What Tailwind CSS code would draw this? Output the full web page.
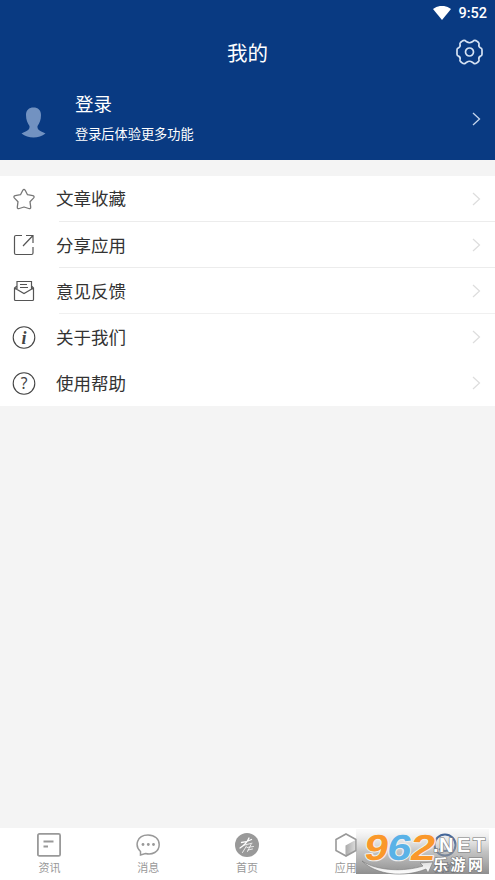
<!DOCTYPE html>
<html lang="zh-CN">
<head>
<meta charset="UTF-8">
<meta name="viewport" content="width=device-width, initial-scale=1">
<title>我的</title>
<script src="https://cdn.jsdelivr.net/npm/@tailwindcss/browser@4"></script>
</head>
<body class="h-[880px] w-[495px] overflow-hidden bg-white font-['Noto_Sans_CJK_SC',sans-serif]">
<div class="relative flex h-[880px] flex-col">
  <header class="h-40 shrink-0 bg-[#093a82] text-white">
    <div class="flex h-[26px] items-center justify-end gap-[7px] pr-2">
      <svg class="h-[15px] w-[18px]" viewBox="0 0 18 15"><path fill="#fff" d="M0 3C5.4-1.200 12.6-1.200 18 3L9 14Z"/></svg>
      <span class="pt-0.5 font-[Roboto,sans-serif] text-[14.5px] leading-none font-medium">9:52</span>
    </div>
    <div class="grid h-[51px] grid-cols-[1fr_auto_1fr] items-center">
      <h1 class="col-start-2 pt-px text-[20.5px] leading-none">我的</h1>
      <svg class="mr-3 h-[26px] w-[27px] justify-self-end" viewBox="-13.5 -13 27 26" fill="none" stroke="#d5e2f3" stroke-width="1.7" stroke-linejoin="round">
        <path d="M-4.400-11.500Q-6-12-7.400-10.800L-9-9.500Q-9.800-8.700-9.500-7.700Q-8.800-5-11-4.100Q-12.500-3.800-12.500-2.300V2.300Q-12.500 3.800-11 4.100Q-8.800 5-9.500 7.700Q-9.800 8.700-9 9.500L-7.400 10.800Q-6 12-4.400 11.500L-2.800 10.200Q0 8.300 2.800 10.200L4.400 11.500Q6 12 7.400 10.800L9 9.500Q9.800 8.700 9.500 7.700Q8.800 5 11 4.100Q12.500 3.800 12.500 2.300V-2.300Q12.500-3.800 11-4.100Q8.800-5 9.500-7.700Q9.800-8.700 9-9.500L7.400-10.800Q6-12 4.400-11.500L2.800-10.200Q0-8.300-2.800-10.200Z"/><circle r="4"/>
      </svg>
    </div>
    <div class="flex h-[83px] items-center pr-[14px] pl-[21px]">
      <svg class="mt-[8px] h-[31px] w-[25px]" viewBox="0 0 25 31"><path fill="#7292c1" d="M5 8C5 3 8 .5 12.5.5S20 3 20 8C20 13 18.500 16 16.500 19C16 23 19 24 24.500 26.500C21 29 17 30.500 12.500 30.500S4 29 .5 26.500C6 24 9 23 8.500 19C6.500 16 5 13 5 8Z"/></svg>
      <div class="ml-[29px] flex-1 pb-[3px]">
        <div class="text-[18.5px] leading-[26px]">登录</div>
        <div class="mt-[7px] text-[13.2px] leading-[22px]">登录后体验更多功能</div>
      </div>
      <svg class="h-3.5 w-[9px]" viewBox="0 0 9 14" fill="none" stroke="#c5d5ec" stroke-width="1.3"><path d="M1 1l6.500 6L1 13"/></svg>
    </div>
  </header>

  <main class="flex-1 bg-[#f4f4f4] pt-[15.500px] text-[17.500px] text-[#333]">
    <ul class="bg-white">
      <li class="flex h-[46.200px] items-center pl-3">
        <svg class="size-6" viewBox="0 0 24 24" fill="none" stroke="#777" stroke-width="1.300" stroke-linejoin="round"><path d="M10.800 3.300Q12 1.500 13.200 3.300L15.500 7.700L20.800 8.600Q23 9.300 21.500 11.100L18 14.700L18.700 20.200Q18.700 22.200 16.700 21.500L12 20L7.300 21.500Q5.300 22.200 5.300 20.200L6 14.700L2.500 11.100Q1 9.300 3.200 8.600L8.500 7.700Z"/></svg>
        <div class="ml-5 flex h-full flex-1 items-center justify-between pr-[14px]"><span>文章收藏</span><svg class="h-3.5 w-[9px]" viewBox="0 0 9 14" fill="none" stroke="#ddd" stroke-width="1.200"><path d="M1 1l6.500 6L1 13"/></svg></div>
      </li>
      <li><div class="-mt-px ml-[59px] h-px bg-[#ececec]"></div></li>
      <li class="flex h-[46.200px] items-center pl-3">
        <svg class="size-6" viewBox="0 0 24 24" fill="none" stroke="#555" stroke-width="1.200"><path d="M10 2.500H4Q2.500 2.500 2.500 4V20Q2.500 21.500 4 21.500H19.500Q21 21.500 21 20V14M11 13L20.500 3M14 2.500H21V10"/></svg>
        <div class="ml-5 flex h-full flex-1 items-center justify-between pr-[14px]"><span>分享应用</span><svg class="h-3.5 w-[9px]" viewBox="0 0 9 14" fill="none" stroke="#ddd" stroke-width="1.200"><path d="M1 1l6.500 6L1 13"/></svg></div>
      </li>
      <li><div class="-mt-px ml-[59px] h-px bg-[#ececec]"></div></li>
      <li class="flex h-[46.200px] items-center pl-3">
        <svg class="size-6" viewBox="0 0 24 24" fill="none" stroke="#555" stroke-width="1.200"><path d="M5 7L2.500 9V20.500Q2.500 21.500 3.500 21.500H20.500Q21.500 21.500 21.500 20.500V9L19.500 7M2.500 9L12 14.500L21.500 9M5 10.500V2.500H19.500V10.500M8 5.500H15M8 8.500H16"/></svg>
        <div class="ml-5 flex h-full flex-1 items-center justify-between pr-[14px]"><span>意见反馈</span><svg class="h-3.5 w-[9px]" viewBox="0 0 9 14" fill="none" stroke="#ddd" stroke-width="1.200"><path d="M1 1l6.500 6L1 13"/></svg></div>
      </li>
      <li><div class="-mt-px ml-[59px] h-px bg-[#f0f0f0]"></div></li>
      <li class="flex h-[46.200px] items-center pl-3">
        <svg class="size-6" viewBox="0 -.5 24 24"><circle cx="12" cy="12" r="10.800" fill="none" stroke="#444" stroke-width="1.100"/><text x="12" y="18" text-anchor="middle" font-family="Liberation Serif, serif" font-size="18" font-style="italic" font-weight="700" fill="#444">i</text></svg>
        <div class="ml-5 flex h-full flex-1 items-center justify-between pr-[14px]"><span>关于我们</span><svg class="h-3.5 w-[9px]" viewBox="0 0 9 14" fill="none" stroke="#ddd" stroke-width="1.200"><path d="M1 1l6.500 6L1 13"/></svg></div>
      </li>
      <li class="flex h-[46.200px] items-center pl-3">
        <svg class="size-6" viewBox="0 -.5 24 24"><circle cx="12" cy="12" r="10.800" fill="none" stroke="#444" stroke-width="1.100"/><text x="12" y="17.500" text-anchor="middle" font-family="Noto Sans, sans-serif" font-size="15.500" fill="#444">?</text></svg>
        <div class="ml-5 flex h-full flex-1 items-center justify-between pr-[14px]"><span>使用帮助</span><svg class="h-3.5 w-[9px]" viewBox="0 0 9 14" fill="none" stroke="#ddd" stroke-width="1.200"><path d="M1 1l6.500 6L1 13"/></svg></div>
      </li>
    </ul>
  </main>

  <nav class="grid h-[52px] shrink-0 grid-cols-5 bg-white pt-[5px] pr-px text-[11px] leading-4 text-[#999]">
    <div class="flex flex-col items-center gap-[2px]">
      <svg class="size-6" viewBox="0 0 24 24" fill="none" stroke="#999" stroke-width="1.800"><rect x=".9" y=".9" width="22.200" height="22" rx="1.500"/><path d="M6.500 8.500H16.500M6.500 13.500H11"/></svg><span>资讯</span>
    </div>
    <div class="flex flex-col items-center gap-[2px]">
      <svg class="size-6" viewBox="0 0 24 24" fill="none" stroke="#999" stroke-width="1.500"><path d="M4.500 22V18.500C-1.500 13 .5 2 12 2C19 2 23.200 6.300 23.200 11.500C23.200 19 16 22.300 9.500 20.600Z"/><g fill="#999" stroke="none"><circle cx="7" cy="11.500" r="1.400"/><circle cx="12.300" cy="11.500" r="1.400"/><circle cx="17.500" cy="11.500" r="1.400"/></g></svg><span>消息</span>
    </div>
    <div class="flex flex-col items-center gap-[2px]">
      <svg class="size-6" viewBox="0 0 24 24"><circle cx="12" cy="12" r="12" fill="#999"/><g fill="none" stroke="#fff" stroke-linecap="round"><path stroke-width="1.300" d="M6.500 9.500Q12 9 16.500 6.500M14 5Q11.500 11 5 15"/><path stroke-width=".8" d="M9 12.200L17 10.200M11.500 13L7.500 19.500M12 14.500L18.500 13.500M16 11.500L12.500 18.500M13 17L17.500 16"/></g></svg><span>首页</span>
    </div>
    <div class="flex flex-col items-center gap-[2px]">
      <svg class="size-6" viewBox="0 0 24 24"><defs><linearGradient id="cube"><stop stop-color="#aaa"/><stop offset="1" stop-color="#ddd"/></linearGradient></defs><path d="M11.500 12.500L22 6.800V17.500L11.500 23Z" fill="url(#cube)"/><path d="M12 1L22 6.500V17.500L12 23L2 17.500V6.500Z" fill="none" stroke="#999" stroke-width="1.600"/></svg><span>应用</span>
    </div>
    <div class="flex flex-col items-center gap-[2px] text-[#093a82]">
      <svg class="size-6" viewBox="0 0 24 24" fill="none" stroke="#093a82" stroke-width="2"><circle cx="12" cy="12" r="10.500"/><path d="M6 16Q12 20 18 16"/></svg><span>我的</span>
    </div>
  </nav>

  <div class="absolute top-[829px] left-[356px] h-[45px] w-[133px]">
    <svg class="size-full overflow-visible" viewBox="0 -1 133 45">
      <defs>
        <linearGradient id="plate" x2="0" y2="1"><stop stop-color="#ddd" stop-opacity=".15"/><stop offset=".5" stop-color="#aaa" stop-opacity=".7"/><stop offset="1" stop-color="#7b7b7b" stop-opacity=".85"/></linearGradient>
        <linearGradient id="swoosh" x2="0" y2="1"><stop stop-color="#ddd"/><stop offset="1" stop-color="#fff"/></linearGradient>
      </defs>
      <path fill="url(#plate)" d="M0-1H133V44H0Z"/>
      <path fill="url(#swoosh)" stroke="#777" stroke-width=".6" d="M6 31C21 41 48 42 67 36L64 33L77 32L72 43L70 39C48 48 20 45 6 31Z"/>
      <g font-family="Liberation Sans, sans-serif" font-weight="700" font-size="36" stroke="#f0f0f0" stroke-width="2" stroke-linejoin="round" paint-order="stroke" transform="translate(7 30) skewX(-9)">
        <text x="0" y="0" fill="#fa982b" textLength="24" lengthAdjust="spacingAndGlyphs">9</text>
        <text x="23" y="0" fill="#5ab2e7" textLength="24" lengthAdjust="spacingAndGlyphs">6</text>
        <text x="46" y="0" fill="#fa982b" textLength="25" lengthAdjust="spacingAndGlyphs">2</text>
      </g>
      <g fill="#fff" stroke="#777" stroke-width="1.200" paint-order="stroke">
        <text x="77 83 101 117" y="22" font-family="Liberation Sans, sans-serif" font-weight="700" font-size="20">.NET</text>
        <text x="77" y="40" font-family="Noto Sans CJK SC, sans-serif" font-weight="700" font-size="15" textLength="50">乐游网</text>
      </g>
    </svg>
  </div>
</div>
</body>
</html>
